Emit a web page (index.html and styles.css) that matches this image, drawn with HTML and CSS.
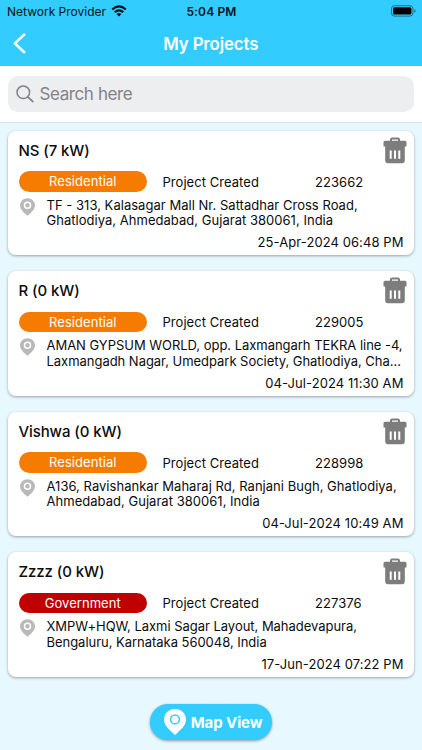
FILE: index.html
```
<!DOCTYPE html>
<html lang="en">
<head>
    <meta charset="UTF-8">
    <meta name="viewport" content="width=device-width, initial-scale=1.0">
    <title>My Projects</title>
    <link rel="stylesheet" href="styles.css">
</head>
<body>

<!-- shared icons -->
<svg class="icon-defs" width="0" height="0">
    <symbol id="icon-trash" viewBox="0 0 24 27">
        <path d="M8 4V2.6Q8 1.5 9.1 1.5H14.9Q16 1.5 16 2.6V4" fill="none" stroke="#7d7d7d" stroke-width="2"/>
        <path d="M2 3.8H22Q23.5 3.8 23.5 5.3V9.5H21.8V23.3Q21.8 26.2 19 26.2H5Q2.2 26.2 2.2 23.3V9.5H.5V5.3Q.5 3.8 2 3.8Z" fill="#7d7d7d"/>
        <path d="M7.7 13.5V21.8M12 13.5V21.8M16.3 13.5V21.8" stroke="#fff" stroke-width="2"/>
    </symbol>
    <symbol id="icon-pin" viewBox="0 0 22 26">
        <path class="pin-body" d="M11 0C4.8 0 0 4.6 0 10.6C0 14.7 2.2 17.6 5.2 20.6L11 26L16.8 20.6C19.8 17.6 22 14.7 22 10.6C22 4.6 17.2 0 11 0Z" fill="currentColor" stroke="none"/>
        <circle class="pin-ring" cx="11" cy="10.4" r="4.4" fill="none"/>
    </symbol>
</svg>

<div class="screen">
    <header class="header">
        <div class="status-bar">
            <div class="carrier">
                <span>Network Provider</span>
                <svg width="16" height="12" viewBox="0 0 16 12">
                    <path d="M1.2 4.5Q8-1.7 14.8 4.5" fill="none" stroke="#06121a" stroke-width="2.2"/>
                    <path d="M3.7 7.2Q8 3.4 12.3 7.2" fill="none" stroke="#06121a" stroke-width="2.1"/>
                    <path d="M5.6 9Q8 7.1 10.4 9L8 11.4Z" fill="#06121a"/>
                </svg>
            </div>
            <span class="time">5:04 PM</span>
            <svg class="battery" width="25" height="12" viewBox="0 0 25 12">
                <rect x=".5" y=".7" width="21.4" height="10.4" rx="3" fill="none" stroke="#1c6d88"/>
                <rect x="2" y="2.2" width="18.4" height="7.4" rx="1.6" fill="#000"/>
                <path d="M23.2 4.2Q24.6 4.7 24.6 5.9Q24.6 7.1 23.2 7.6Z" fill="#1c6d88"/>
            </svg>
        </div>
        <div class="nav-bar">
            <svg class="back" width="14" height="22" viewBox="0 0 14 22">
                <path d="M11.2 1.6L1.9 10.4L11.2 19.2" fill="none" stroke="#fff" stroke-width="2.6" stroke-linecap="round" stroke-linejoin="round"/>
            </svg>
            <h1>My Projects</h1>
        </div>
    </header>

    <div class="search-area">
        <div class="search-box">
            <svg width="18" height="18" viewBox="0 0 18 18">
                <circle cx="7.3" cy="7.3" r="6.3" fill="none" stroke="#828388" stroke-width="1.5"/>
                <path d="M11.8 11.8L16.8 16.6" stroke="#828388" stroke-width="1.8" stroke-linecap="round"/>
            </svg>
            <span>Search here</span>
        </div>
    </div>

    <main class="project-list">
        <div class="card">
            <div class="card-top">
                <h2>NS (7 kW)</h2>
                <svg class="trash"><use href="#icon-trash"/></svg>
            </div>
            <div class="card-info">
                <span class="badge">Residential</span>
                <span class="stage">Project Created</span>
                <span class="number">223662</span>
            </div>
            <div class="card-address">
                <svg class="pin"><use href="#icon-pin"/></svg>
                <p>TF - 313, Kalasagar Mall Nr. Sattadhar Cross Road,<br>Ghatlodiya, Ahmedabad, Gujarat 380061, India</p>
            </div>
            <div class="date">25-Apr-2024 06:48 PM</div>
        </div>

        <div class="card">
            <div class="card-top">
                <h2>R (0 kW)</h2>
                <svg class="trash"><use href="#icon-trash"/></svg>
            </div>
            <div class="card-info">
                <span class="badge">Residential</span>
                <span class="stage">Project Created</span>
                <span class="number">229005</span>
            </div>
            <div class="card-address tight">
                <svg class="pin"><use href="#icon-pin"/></svg>
                <p>AMAN GYPSUM WORLD, opp. Laxmangarh TEKRA line -4,<br>Laxmangadh Nagar, Umedpark Society, Ghatlodiya, Cha...</p>
            </div>
            <div class="date">04-Jul-2024 11:30 AM</div>
        </div>

        <div class="card">
            <div class="card-top">
                <h2>Vishwa (0 kW)</h2>
                <svg class="trash"><use href="#icon-trash"/></svg>
            </div>
            <div class="card-info">
                <span class="badge">Residential</span>
                <span class="stage">Project Created</span>
                <span class="number">228998</span>
            </div>
            <div class="card-address">
                <svg class="pin"><use href="#icon-pin"/></svg>
                <p>A136, Ravishankar Maharaj Rd, Ranjani Bugh, Ghatlodiya,<br>Ahmedabad, Gujarat 380061, India</p>
            </div>
            <div class="date">04-Jul-2024 10:49 AM</div>
        </div>

        <div class="card">
            <div class="card-top">
                <h2>Zzzz (0 kW)</h2>
                <svg class="trash"><use href="#icon-trash"/></svg>
            </div>
            <div class="card-info">
                <span class="badge government">Government</span>
                <span class="stage">Project Created</span>
                <span class="number">227376</span>
            </div>
            <div class="card-address tight">
                <svg class="pin"><use href="#icon-pin"/></svg>
                <p>XMPW+HQW, Laxmi Sagar Layout, Mahadevapura,<br>Bengaluru, Karnataka 560048, India</p>
            </div>
            <div class="date">17-Jun-2024 07:22 PM</div>
        </div>
    </main>

    <button class="map-btn">
        <svg class="pin"><use href="#icon-pin"/></svg>
        <span>Map View</span>
    </button>
</div>

</body>
</html>
```
FILE: styles.css
```
* {
    box-sizing: border-box;
}
body {
    margin: 0;
    font-family: Inter, "Liberation Sans", sans-serif;
    background-color: #e8f8ff;
    color: #0c0c0c;
}
h1, h2, p {
    margin: 0;
}
svg {
    display: block;
    flex-shrink: 0;
}
.icon-defs {
    position: absolute;
}
.screen {
    height: 750px;
    overflow: hidden;
    display: flex;
    flex-direction: column;
}
.header {
    height: 66px;
    background-color: #33ccff;
    flex-shrink: 0;
}
.status-bar {
    height: 22px;
    padding: 0 6px 0 7px;
    display: grid;
    grid-template-columns: 1fr auto 1fr;
    align-items: center;
    color: #06121a;
}
.carrier {
    display: flex;
    align-items: center;
    gap: 5px;
    font-size: 12px;
    white-space: nowrap;
}
.time {
    font-size: 12px;
    font-weight: 600;
    letter-spacing: 0.15px;
}
.battery {
    justify-self: end;
}
.nav-bar {
    height: 43px;
    padding: 0 13px 0 12.5px;
    display: grid;
    grid-template-columns: 14px 1fr 14px;
    align-items: center;
}
h1 {
    text-align: center;
    color: #fff;
    font-size: 16.8px;
    font-weight: 600;
    letter-spacing: -0.1px;
}
.search-area {
    height: 57px;
    padding: 10px 8.5px 10px 8px;
    background-color: #fff;
    border-bottom: 1px solid #d5e6ee;
    flex-shrink: 0;
}
.search-box {
    height: 36px;
    padding: 0 8px;
    border-radius: 10px;
    background-color: #edeef0;
    display: flex;
    align-items: center;
    gap: 5.5px;
    font-size: 17px;
    letter-spacing: -0.4px;
    color: #828388;
}
.project-list {
    padding: 7.5px 8.5px 0 8px;
    display: flex;
    flex-direction: column;
    gap: 16px;
}
.card {
    height: 124.5px;
    padding: 0 10px 0 10.5px;
    border-radius: 8px;
    background-color: #fff;
    box-shadow: 0 1px 3px rgba(0, 0, 0, 0.35);
}
.card-top {
    height: 40.5px;
    display: flex;
    justify-content: space-between;
}
.card-top h2 {
    font-size: 15px;
    font-weight: 500;
    line-height: 40px;
    letter-spacing: -0.1px;
}
.trash {
    width: 24px;
    height: 27px;
    margin: 6px -3px 0 0;
}
.card-info {
    height: 21px;
    display: grid;
    grid-template-columns: 128.5px 128px 1fr;
    align-items: center;
    font-size: 13px;
    letter-spacing: 0.05px;
}
.badge {
    height: 20.5px;
    line-height: 21px;
    border-radius: 11px;
    background-color: #f57c00;
    color: #fff;
    text-align: center;
}
.badge.government {
    background-color: #c00000;
}
.stage {
    padding-left: 15.5px;
}
.number {
    padding-left: 40px;
}
.card-address {
    height: 40px;
    padding: 5.5px 0 0 1.5px;
    display: flex;
    gap: 11.5px;
}
.card-address .pin {
    width: 15px;
    height: 18px;
    color: #b9b9b9;
    stroke: #fff;
    stroke-width: 2.2;
}
.card-address p {
    font-size: 13px;
    line-height: 15.6px;
    letter-spacing: 0.03px;
    white-space: nowrap;
}
.card-address.tight p {
    letter-spacing: -0.03px;
}
.date {
    line-height: 20px;
    font-size: 13px;
    letter-spacing: 0.08px;
    text-align: right;
}
.map-btn {
    width: 122.5px;
    height: 36px;
    margin: 27.5px auto 0;
    padding: 0 0 0 14px;
    border: none;
    border-radius: 18px;
    background-color: #33ccff;
    box-shadow: 0 1px 3px rgba(0, 0, 0, 0.4);
    color: #fff;
    display: flex;
    align-items: center;
    gap: 5px;
    font-family: inherit;
    font-size: 15px;
    font-weight: 700;
    letter-spacing: -0.1px;
    white-space: nowrap;
    flex-shrink: 0;
}
.map-btn .pin {
    width: 22px;
    height: 26px;
    stroke: #33ccff;
    stroke-width: 1.6;
}
```
